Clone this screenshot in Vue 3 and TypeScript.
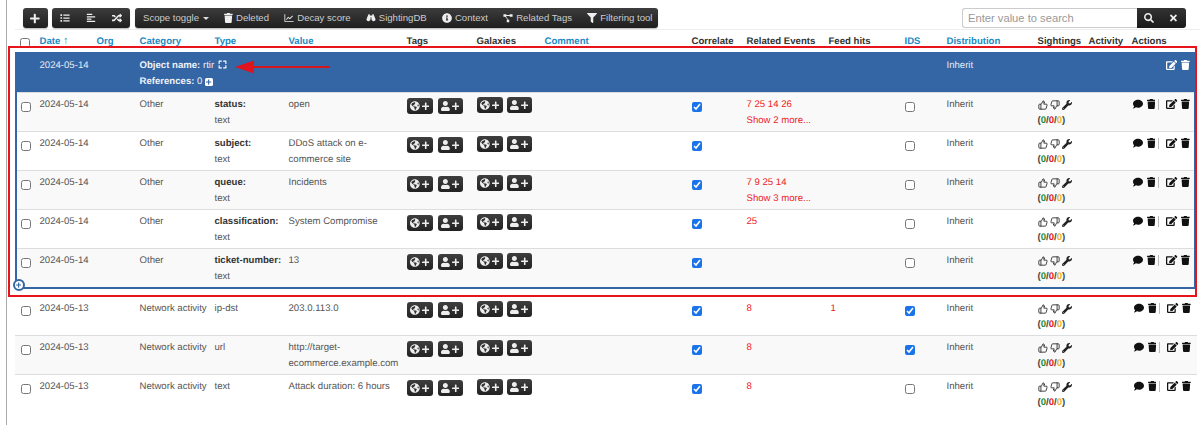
<script setup lang="ts">
import { h } from 'vue'
import type { FunctionalComponent } from 'vue'

interface IconDef { vb: string; d: string; stroke?: number }
const icons: Record<string, IconDef> = {
  plus: { vb: '0 0 448 512', d: 'M416 208H272V64c0-17.67-14.33-32-32-32h-32c-17.67 0-32 14.33-32 32v144H32c-17.67 0-32 14.33-32 32v32c0 17.67 14.33 32 32 32h144v144c0 17.67 14.33 32 32 32h32c17.67 0 32-14.33 32-32V304h144c17.67 0 32-14.33 32-32v-32c0-17.67-14.33-32-32-32z' },
  times: { vb: '0 0 352 512', d: 'M242.72 256l100.07-100.07c12.28-12.28 12.28-32.19 0-44.48l-22.24-22.24c-12.28-12.28-32.19-12.28-44.48 0L176 189.28 75.93 89.21c-12.28-12.28-32.19-12.28-44.48 0L9.21 111.45c-12.28 12.28-12.28 32.19 0 44.48L109.28 256 9.21 356.07c-12.28 12.28-12.28 32.19 0 44.48l22.24 22.24c12.28 12.28 32.2 12.28 44.48 0L176 322.72l100.07 100.07c12.28 12.28 32.2 12.28 44.48 0l22.24-22.24c12.28-12.28 12.28-32.19 0-44.48L242.72 256z' },
  search: { vb: '0 0 512 512', d: 'M505 442.7L405.3 343c-4.5-4.5-10.6-7-17-7H372c27.6-35.3 44-79.7 44-128C416 93.1 322.9 0 208 0S0 93.1 0 208s93.1 208 208 208c48.3 0 92.7-16.4 128-44v16.3c0 6.4 2.5 12.5 7 17l99.7 99.7c9.4 9.4 24.6 9.4 33.9 0l28.3-28.3c9.4-9.4 9.4-24.6.1-34zM208 336c-70.7 0-128-57.2-128-128 0-70.7 57.2-128 128-128 70.7 0 128 57.2 128 128 0 70.7-57.2 128-128 128z' },
  trash: { vb: '0 0 448 512', d: 'M432 32H312l-9.4-18.7A24 24 0 0 0 281.1 0H166.8a23.72 23.72 0 0 0-21.4 13.3L136 32H16A16 16 0 0 0 0 48v32a16 16 0 0 0 16 16h416a16 16 0 0 0 16-16V48a16 16 0 0 0-16-16zM53.2 467a48 48 0 0 0 47.9 45h245.8a48 48 0 0 0 47.9-45L416 128H32z' },
  comment: { vb: '0 0 512 512', d: 'M256 32C114.6 32 0 125.1 0 240c0 49.6 21.4 95 57 130.7C44.5 421.1 2.7 466 2.2 466.5c-2.2 2.3-2.8 5.7-1.5 8.7S4.8 480 8 480c66.3 0 116-31.8 140.6-51.4 32.7 12.3 69 19.4 107.4 19.4 141.4 0 256-93.1 256-208S397.4 32 256 32z' },
  info: { vb: '0 0 512 512', d: 'M256 8C119.043 8 8 119.083 8 256c0 136.997 111.043 248 248 248s248-111.003 248-248C504 119.083 392.957 8 256 8zm0 110c23.196 0 42 18.804 42 42s-18.804 42-42 42-42-18.804-42-42 18.804-42 42-42zm56 254c0 6.627-5.373 12-12 12h-88c-6.627 0-12-5.373-12-12v-24c0-6.627 5.373-12 12-12h12v-64h-12c-6.627 0-12-5.373-12-12v-24c0-6.627 5.373-12 12-12h64c6.627 0 12 5.373 12 12v100h12c6.627 0 12 5.373 12 12v24z' },
  filter: { vb: '0 0 512 512', d: 'M487.976 0H24.028C2.71 0-8.047 25.866 7.058 40.971L192 225.941V432c0 7.831 3.821 15.17 10.237 19.662l80 55.98C298.02 518.69 320 507.493 320 487.98V225.941l184.947-184.97C520.021 25.896 509.338 0 487.976 0z' },
  user: { vb: '0 0 448 512', d: 'M224 256c70.7 0 128-57.3 128-128S294.7 0 224 0 96 57.3 96 128s57.3 128 128 128zm89.6 32h-16.7c-22.2 10.2-46.9 16-72.9 16s-50.6-5.8-72.9-16h-16.7C60.2 288 0 348.2 0 422.4V464c0 26.5 21.5 48 48 48h352c26.5 0 48-21.5 48-48v-41.6c0-74.2-60.2-134.4-134.4-134.4z' },
  edit: { vb: '0 0 576 512', d: 'M402.6 83.2l90.2 90.2c3.8 3.8 3.8 10 0 13.8L274.4 405.6l-92.8 10.3c-12.4 1.4-22.9-9.1-21.5-21.5l10.3-92.8L388.8 83.2c3.8-3.8 10-3.8 13.8 0zm162-22.9l-48.8-48.8c-15.2-15.2-39.9-15.2-55.2 0l-35.4 35.4c-3.8 3.8-3.8 10 0 13.8l90.2 90.2c3.8 3.8 10 3.8 13.8 0l35.4-35.4c15.2-15.3 15.2-40 0-55.2zM384 346.2V448H64V128h229.8c3.2 0 6.2-1.3 8.5-3.5l40-40c7.6-7.6 2.2-20.5-8.5-20.5H48C21.5 64 0 85.5 0 112v352c0 26.5 21.5 48 48 48h352c26.5 0 48-21.5 48-48V306.2c0-10.7-12.9-16-20.5-8.5l-40 40c-2.2 2.3-3.5 5.3-3.5 8.5z' },
  wrench: { vb: '0 0 512 512', d: 'M507.73 109.1c-2.24-9.03-13.54-12.09-20.12-5.51l-74.36 74.36-67.88-11.31-11.31-67.88 74.36-74.36c6.62-6.62 3.43-17.9-5.66-20.16-47.38-11.74-99.55.91-136.58 37.93-39.64 39.64-50.55 97.1-34.05 147.2L18.74 402.76c-24.99 24.99-24.99 65.51 0 90.5 24.99 24.99 65.51 24.99 90.5 0l213.21-213.21c50.12 16.71 107.47 5.68 147.37-34.22 37.07-37.07 49.7-89.32 37.91-136.73zM64 472c-13.25 0-24-10.75-24-24 0-13.26 10.75-24 24-24s24 10.74 24 24c0 13.25-10.75 24-24 24z' },
  random: { vb: '0 0 512 512', d: 'M504.971 359.029c9.373 9.373 9.373 24.569 0 33.941l-80 79.984c-15.01 15.01-40.971 4.49-40.971-16.971V416h-58.785a12.004 12.004 0 0 1-8.773-3.812l-70.556-75.596 53.333-57.143L352 336h32v-39.981c0-21.438 25.943-31.998 40.971-16.971l80 79.981zM12 176h84l52.781 56.551 53.333-57.143-70.556-75.596A11.999 11.999 0 0 0 122.785 96H12c-6.627 0-12 5.373-12 12v56c0 6.627 5.373 12 12 12zm372 0v39.984c0 21.46 25.961 31.98 40.971 16.971l80-79.984c9.373-9.373 9.373-24.569 0-33.941l-80-79.981C409.943 24.021 384 34.582 384 56.019V96h-58.785a12.004 12.004 0 0 0-8.773 3.812L96 336H12c-6.627 0-12 5.373-12 12v56c0 6.627 5.373 12 12 12h110.785c3.326 0 6.503-1.381 8.773-3.812L352 176h32z' },
  globe: { vb: '0 0 496 512', d: 'M248 8C111.03 8 0 119.03 0 256s111.03 248 248 248 248-111.03 248-248S384.97 8 248 8zm82.29 357.6c-3.9 3.88-7.99 7.95-11.31 11.28-2.99 3-5.1 6.7-6.17 10.71-1.51 5.66-2.73 11.38-4.77 16.87l-17.39 46.85c-13.76 3-28 4.69-42.65 4.69v-27.38c1.69-12.62-7.64-36.26-22.63-51.25-6-6-9.37-14.14-9.37-22.63v-32.01c0-11.64-6.27-22.34-16.46-27.97-14.37-7.95-34.81-19.06-48.81-26.11-11.48-5.78-22.1-13.14-31.65-21.75l-.8-.72a114.792 114.792 0 0 1-18.06-20.74c-9.38-13.77-24.66-36.42-34.59-51.14 20.47-45.5 57.36-82.04 103.2-101.89l24.01 12.01C203.48 89.74 216 82.01 216 70.11v-11.3c7.99-1.29 16.12-2.11 24.39-2.42l28.3 28.3c6.25 6.25 6.25 16.38 0 22.63L264 112l-10.34 10.34c-3.12 3.12-3.12 8.19 0 11.31l4.69 4.69c3.12 3.12 3.12 8.19 0 11.31l-8 8a8.008 8.008 0 0 1-5.66 2.34h-8.99c-2.08 0-4.08.81-5.58 2.27l-9.92 9.65a8.008 8.008 0 0 0-1.58 9.31l15.59 31.19c2.66 5.32-1.21 11.58-7.15 11.58h-5.64c-1.93 0-3.79-.7-5.24-1.96l-9.28-8.06a16.017 16.017 0 0 0-15.55-3.1l-31.17 10.39a11.95 11.95 0 0 0-8.17 11.34c0 4.53 2.56 8.66 6.61 10.69l11.08 5.54c9.41 4.71 19.79 7.16 30.31 7.16s22.59 27.29 32 32h66.75c8.49 0 16.62 3.37 22.63 9.37l13.69 13.69a30.503 30.503 0 0 1 8.93 21.57 46.536 46.536 0 0 1-13.72 32.98zM417 274.25c-5.79-1.45-10.84-5-14.15-9.97l-17.98-26.97a23.97 23.97 0 0 1 0-26.62l19.59-29.38c2.32-3.47 5.5-6.29 9.24-8.15l12.98-6.49C440.2 193.59 448 223.87 448 256c0 8.67-.74 17.16-1.82 25.54L417 274.25z' },
  thumbUp: { vb: '0 0 24 24', stroke: 2, d: 'M7 10v12M15 5.88 14 10h5.83a2 2 0 0 1 1.92 2.56l-2.33 8A2 2 0 0 1 17.5 22H4a2 2 0 0 1-2-2v-8a2 2 0 0 1 2-2h2.76a2 2 0 0 0 1.79-1.11L12 2a3.13 3.13 0 0 1 3 3.88Z' },
  thumbDown: { vb: '0 0 24 24', stroke: 2, d: 'M17 14V2M9 18.12 10 14H4.17a2 2 0 0 1-1.92-2.56l2.33-8A2 2 0 0 1 6.5 2H20a2 2 0 0 1 2 2v8a2 2 0 0 1-2 2h-2.76a2 2 0 0 0-1.79 1.11L12 22a3.13 3.13 0 0 1-3-3.88Z' },
  expand: { vb: '0 0 24 24', stroke: 3, d: 'M3 9V3h6M15 3h6v6M21 15v6h-6M9 21H3v-6' },
  list: { vb: '0 0 24 24', d: 'M1 3h4v4H1zM1 10h4v4H1zM1 17h4v4H1zM8 3.5h15v3H8zM8 10.5h15v3H8zM8 17.5h15v3H8z' },
  align: { vb: '0 0 24 24', d: 'M2 2h13v3H2zM2 7.5h20v3H2zM2 13h11v3H2zM2 18.500h20v3H2z' },
  chart: { vb: '0 0 24 24', d: 'M1 3h2v16h20v2H1zM5 15l5-6 4 3 6-6 1.500 1.500-7.300 7.500-4-3-4 4.500z' },
  binoculars: { vb: '0 0 24 24', d: 'M6 3h3v3h6V3h3l5 12a4.800 4.800 0 1 1-10-1v-4h-2v4a4.800 4.800 0 1 1-10 1z' },
  diagram: { vb: '0 0 24 24', d: 'M1 3h7v6H1zM16 3h7v6h-7zM9 16h6v6H9zM8 5h8v2H8zM5 9l7 8 1.500-1L7 9z' },
}

const Icon: FunctionalComponent<{ name: string }> = (props) => {
  const def = icons[props.name]
  return h(
    'svg',
    { viewBox: def.vb, xmlns: 'http://www.w3.org/2000/svg', class: 'ic' },
    [
      h('path', def.stroke
        ? { d: def.d, fill: 'none', stroke: 'currentColor', 'stroke-width': def.stroke, 'stroke-linecap': 'round', 'stroke-linejoin': 'round' }
        : { d: def.d, fill: 'currentColor' }),
    ],
  )
}
Icon.props = ['name']

interface Row {
  date: string
  category: string
  type: string
  sub?: string
  value: string
  correlate: boolean
  related: string
  more?: string
  feed?: string
  ids: boolean
}

const objectRows: Row[] = [
  { date: '2024-05-14', category: 'Other', type: 'status:', sub: 'text', value: 'open', correlate: true, related: '7 25 14 26', more: 'Show 2 more...', ids: false },
  { date: '2024-05-14', category: 'Other', type: 'subject:', sub: 'text', value: 'DDoS attack on e-commerce site', correlate: true, related: '', ids: false },
  { date: '2024-05-14', category: 'Other', type: 'queue:', sub: 'text', value: 'Incidents', correlate: true, related: '7 9 25 14', more: 'Show 3 more...', ids: false },
  { date: '2024-05-14', category: 'Other', type: 'classification:', sub: 'text', value: 'System Compromise', correlate: true, related: '25', ids: false },
  { date: '2024-05-14', category: 'Other', type: 'ticket-number:', sub: 'text', value: '13', correlate: true, related: '', ids: false },
]

const plainRows: Row[] = [
  { date: '2024-05-13', category: 'Network activity', type: 'ip-dst', value: '203.0.113.0', correlate: true, related: '8', feed: '1', ids: true },
  { date: '2024-05-13', category: 'Network activity', type: 'url', value: 'http://target-ecommerce.example.com', correlate: true, related: '8', ids: true },
  { date: '2024-05-13', category: 'Network activity', type: 'text', value: 'Attack duration: 6 hours', correlate: true, related: '8', ids: false },
]

const toolButtons = [
  { icon: 'trash', label: 'Deleted' },
  { icon: 'chart', label: 'Decay score' },
  { icon: 'binoculars', label: 'SightingDB' },
  { icon: 'info', label: 'Context' },
  { icon: 'diagram', label: 'Related Tags' },
  { icon: 'filter', label: 'Filtering tool' },
]
</script>

<template>
  <div class="page">
    <div class="toolbar">
      <div class="group"><button class="btn square plus-btn"><Icon name="plus" /></button></div>
      <div class="group">
        <button class="btn square"><Icon name="list" /></button>
        <button class="btn square"><Icon name="align" /></button>
        <button class="btn square"><Icon name="random" /></button>
      </div>
      <div class="group">
        <button class="btn text">Scope toggle<span class="caret"></span></button>
        <button v-for="b in toolButtons" :key="b.label" class="btn text">
          <Icon :name="b.icon" />{{ b.label }}
        </button>
      </div>
      <div class="search">
        <input class="search-input" placeholder="Enter value to search" />
        <div class="search-btns">
          <button class="btn sb"><Icon name="search" /></button>
          <button class="btn sb"><Icon name="times" /></button>
        </div>
      </div>
    </div>

    <div class="table">
      <div class="grid head">
        <div><input type="checkbox" class="cb head-cb" /></div>
        <div class="link">Date <span class="sort">↑</span></div>
        <div class="link">Org</div>
        <div class="link">Category</div>
        <div class="link">Type</div>
        <div class="link">Value</div>
        <div>Tags</div>
        <div>Galaxies</div>
        <div class="link">Comment</div>
        <div>Correlate</div>
        <div>Related Events</div>
        <div>Feed hits</div>
        <div class="link">IDS</div>
        <div class="link">Distribution</div>
        <div>Sightings</div>
        <div>Activity</div>
        <div>Actions</div>
      </div>

      <div class="object">
        <div class="grid blue">
          <div></div>
          <div>2024-05-14</div>
          <div></div>
          <div class="obj-name">
            <div><b>Object name:</b> rtir <Icon name="expand" class="expand" /></div>
            <div><b>References:</b> 0 <span class="ref-plus"><Icon name="plus" /></span></div>
          </div>
          <div class="dist">Inherit</div>
          <div class="blue-actions"><Icon name="edit" /><Icon name="trash" /></div>
        </div>

        <div v-for="(r, i) in objectRows" :key="r.type" class="grid row" :class="{ odd: i % 2 === 0 }">
          <div><input type="checkbox" class="cb" /></div>
          <div>{{ r.date }}</div>
          <div></div>
          <div>{{ r.category }}</div>
          <div class="nowrap"><b>{{ r.type }}</b><br />{{ r.sub }}</div>
          <div class="value">{{ r.value }}</div>
          <div class="tagbtns"><span class="tb"><Icon name="globe" /><Icon name="plus" /></span><span class="tb"><Icon name="user" /><Icon name="plus" /></span></div>
          <div class="tagbtns gal"><span class="tb"><Icon name="globe" /><Icon name="plus" /></span><span class="tb"><Icon name="user" /><Icon name="plus" /></span></div>
          <div></div>
          <div><input type="checkbox" class="cb" :checked="r.correlate" /></div>
          <div class="red">{{ r.related }}<template v-if="r.more"><br />{{ r.more }}</template></div>
          <div class="red">{{ r.feed }}</div>
          <div><input type="checkbox" class="cb" :checked="r.ids" /></div>
          <div>Inherit</div>
          <div class="sight">
            <div class="sicons"><Icon name="thumbUp" /><Icon name="thumbDown" /><Icon name="wrench" /></div>
            <div class="counts">(<span class="g">0</span>/<span class="r">0</span>/<span class="o">0</span>)</div>
          </div>
          <div></div>
          <div class="actions"><Icon name="comment" /><Icon name="trash" /><span class="sep"></span><Icon name="edit" /><Icon name="trash" /></div>
        </div>
        <span class="add-circle"><Icon name="plus" /></span>
      </div>

      <div class="spacer"></div>

      <div v-for="(r, i) in plainRows" :key="r.type" class="grid row plain" :class="{ odd: i % 2 === 1 }">
        <div><input type="checkbox" class="cb" /></div>
        <div>{{ r.date }}</div>
        <div></div>
        <div class="nowrap">{{ r.category }}</div>
        <div class="nowrap">{{ r.type }}</div>
        <div class="value">{{ r.value }}</div>
        <div class="tagbtns"><span class="tb"><Icon name="globe" /><Icon name="plus" /></span><span class="tb"><Icon name="user" /><Icon name="plus" /></span></div>
        <div class="tagbtns gal"><span class="tb"><Icon name="globe" /><Icon name="plus" /></span><span class="tb"><Icon name="user" /><Icon name="plus" /></span></div>
        <div></div>
        <div><input type="checkbox" class="cb" :checked="r.correlate" /></div>
        <div class="red">{{ r.related }}</div>
        <div class="red feed">{{ r.feed }}</div>
        <div><input type="checkbox" class="cb" :checked="r.ids" /></div>
        <div>Inherit</div>
        <div class="sight">
          <div class="sicons"><Icon name="thumbUp" /><Icon name="thumbDown" /><Icon name="wrench" /></div>
          <div class="counts">(<span class="g">0</span>/<span class="r">0</span>/<span class="o">0</span>)</div>
        </div>
        <div></div>
        <div class="actions"><Icon name="comment" /><Icon name="trash" /><span class="sep"></span><Icon name="edit" /><Icon name="trash" /></div>
      </div>
    </div>

    <div class="red-box"></div>
    <svg class="arrow" viewBox="0 0 95 14" xmlns="http://www.w3.org/2000/svg">
      <path d="M17 6H95v2H17z" fill="#d8141c" />
      <path d="M0 7 19 .5v13z" fill="#e0141c" />
    </svg>
  </div>
</template>

<style scoped>
.page {
  position: relative;
  box-sizing: border-box;
  width: 1194px;
  height: 425px;
  margin-left: 6px;
  border-left: 1.5px solid #aaa;
  overflow: hidden;
  font-family: "Liberation Sans", Arial, sans-serif;
  font-size: 9.6px;
  line-height: 16px;
  color: #555;
  background: #fff;
  text-rendering: geometricPrecision;
}
.ic { display: inline-block; height: 10px; width: auto; vertical-align: -1.5px; }

.toolbar {
  display: flex;
  height: 20px;
  padding: 8px 0 0 15.500px;
  gap: 4.500px;
  box-sizing: content-box;
}
.group {
  display: flex;
  border-radius: 3px;
  overflow: hidden;
  background: linear-gradient(#3c3c3c, #1f1f1f);
  box-shadow: 0 1px 1px rgba(0, 0, 0, .25);
}
.btn {
  display: flex;
  align-items: center;
  justify-content: center;
  border: 0;
  padding: 0;
  margin: 0;
  background: transparent;
  color: #eee;
  font: inherit;
}
.square { width: 26px; }
.square .ic { height: 10px; }
.plus-btn { width: 25px; }
.plus-btn .ic { height: 11px; }
.text { padding: 0 7.600px; gap: 3px; color: #ccc; white-space: nowrap; }
.text:first-child { padding-left: 8.500px; }
.text:last-child { padding-right: 6px; }
.text .ic { color: #eee; height: 10px; }
.caret {
  display: inline-block;
  width: 0;
  height: 0;
  margin-left: 1px;
  border-left: 3px solid transparent;
  border-right: 3px solid transparent;
  border-top: 3px solid #ddd;
}
.search { display: flex; margin-left: 299px; }
.search-input {
  box-sizing: border-box;
  width: 175px;
  height: 20px;
  padding: 0 5px;
  border: 1px solid #ccc;
  border-right: 0;
  border-radius: 3px 0 0 3px;
  font-family: inherit;
  font-size: 11.200px;
  outline: 0;
}
.search-input::placeholder { color: #999; opacity: 1; }
.search-btns {
  display: flex;
  width: 49px;
  border-radius: 0 3px 3px 0;
  background: linear-gradient(#333, #1a1a1a);
}
.sb { width: 24.500px; }
.sb .ic { height: 10px; }

.table { margin-top: 1px; padding-left: 7.500px; }
.grid {
  display: grid;
  grid-template-columns: 25px 57px 43px 75px 74px 118px 70px 68px 147px 55px 82px 76px 42px 91px 51px 43px 1fr;
}
.head {
  height: 23px;
  border-top: 1px solid #eee;
  color: #333;
  font-weight: 700;
  padding-top: 4px;
  box-sizing: border-box;
}
.head > div { white-space: nowrap; }
.link { color: #1c8ac4; }
.sort { font-size: 11px; line-height: 10px; }
.head-cb { margin: 4px 0 0 5.500px !important; }

.object { position: relative; width: 1181px; }
.object::after {
  content: "";
  position: absolute;
  inset: 0;
  border: 2px solid #3465a4;
  border-top: 0;
  pointer-events: none;
}
.blue {
  height: 40px;
  padding-top: 6px;
  box-sizing: border-box;
  background: #3465a4;
  color: #e4ebf4;
}
.obj-name { grid-column: span 5; color: #eef2f8; }
.obj-name b { font-weight: 700; }
.expand { height: 9px; vertical-align: -1px; margin-left: 1px; color: #fff; }
.ref-plus {
  display: inline-flex;
  align-items: center;
  justify-content: center;
  width: 8px;
  height: 8px;
  border-radius: 1.500px;
  background: #fff;
  color: #3465a4;
  vertical-align: -1px;
}
.ref-plus .ic { height: 6px; }
.blue > .dist { grid-column: 14 / span 1; }
.blue-actions {
  grid-column: 15 / -1;
  display: flex;
  justify-content: flex-end;
  gap: 4px;
  padding: 2px 6px 0 0;
  color: #fff;
}
.blue-actions .ic { height: 10px; }

.row {
  height: 39px;
  box-sizing: border-box;
  border-top: 1px solid #ddd;
  padding-top: 4px;
  background: #fff;
}
.object .row:last-of-type { height: 41px; }
.row.odd { background: #f9f9f9; }
.plain { width: 1182px; }
.nowrap { white-space: nowrap; }
b { font-weight: 700; color: #333; }
.blue b { color: inherit; }
.value { padding-right: 6px; }
.cb {
  display: block;
  width: 10px;
  height: 10px;
  margin: 5px 0 0 6.500px;
  accent-color: #1a73e8;
}
.plain .cb { margin-left: 6px; }
.row > div:nth-child(10) .cb,
.row > div:nth-child(13) .cb { margin-left: .5px; }
.tagbtns { display: flex; gap: 5px; padding-top: 1px; align-items: flex-start; }
.gal { padding-top: 0; gap: 4px; }
.tb {
  display: inline-flex;
  align-items: center;
  justify-content: center;
  gap: 2px;
  width: 26px;
  height: 16px;
  border-radius: 3px;
  background: linear-gradient(#3e3e3e, #222);
  color: #eee;
}
.tb + .tb { width: 25px; }
.tb .ic { height: 10px; }
.tb .ic + .ic { height: 8.500px; }
.red { color: #ee1c25; white-space: nowrap; }
.feed { padding-left: 2px; }
.sicons { display: flex; gap: 2px; align-items: center; height: 16px; color: #222; }
.sicons .ic { width: 10px; height: 10px; }
.counts { font-weight: 700; color: #444; }
.g { color: #2e8b2e; }
.r { color: #e01b24; }
.o { color: #efb02b; }
.actions {
  display: flex;
  align-items: flex-start;
  color: #111;
  padding: 2px 0 0 1px;
}
.actions .ic { height: 10px; }
.actions .ic:nth-child(2) { margin-left: 4px; }
.sep { width: 1px; height: 11px; background: #bbb; margin: 0 7px 0 3px; }
.actions .sep + .ic { margin-right: 3.500px; }
.plain .actions { padding-left: 2px; }
.spacer { height: 7px; }
.add-circle {
  position: absolute;
  left: -2px;
  bottom: -2px;
  z-index: 2;
  display: flex;
  align-items: center;
  justify-content: center;
  box-sizing: border-box;
  width: 12px;
  height: 12px;
  border: 2px solid #3465a4;
  border-radius: 50%;
  background: #fff;
  color: #3465a4;
}
.add-circle .ic { height: 6px; }

.red-box {
  position: absolute;
  left: .5px;
  top: 46px;
  width: 1189px;
  height: 251px;
  box-sizing: border-box;
  border: 2px solid #e8141c;
  pointer-events: none;
}
.arrow {
  position: absolute;
  left: 227.500px;
  top: 60px;
  width: 95px;
  height: 14px;
}
</style>

<style>
html, body { margin: 0; padding: 0; background: #fff; }
</style>
